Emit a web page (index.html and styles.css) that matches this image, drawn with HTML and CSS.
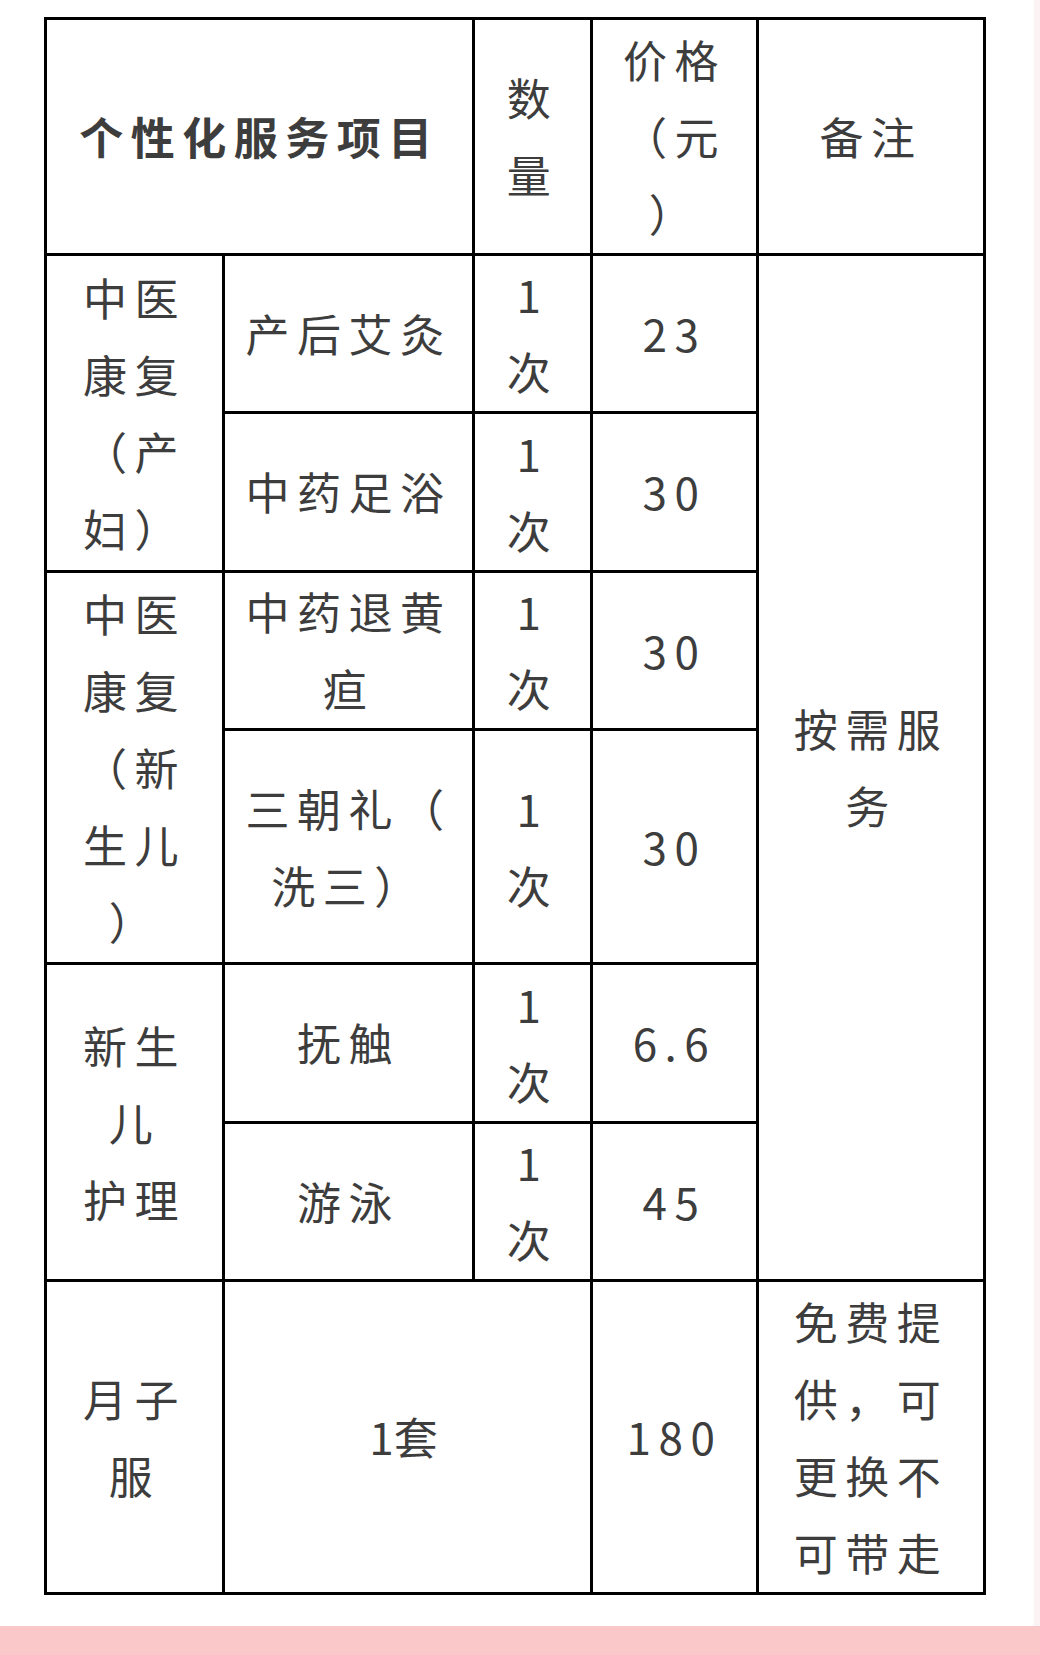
FILE: index.html
```html
<!DOCTYPE html>
<html lang="zh-CN">
<head>
<meta charset="utf-8">
<title>个性化服务项目</title>
<link rel="stylesheet" href="styles.css">
</head>
<body>
<div class="page">
  <table class="price-table">
    <colgroup>
      <col class="c-cat">
      <col class="c-item">
      <col class="c-qty">
      <col class="c-price">
      <col class="c-note">
    </colgroup>
    <tr class="head">
      <th colspan="2" class="title">个性化服务项目</th>
      <th>数<br>量</th>
      <th>价格<br>（元<br>）</th>
      <th>备注</th>
    </tr>
    <tr>
      <td rowspan="2">中医<br>康复<br>（产<br>妇）</td>
      <td>产后艾灸</td>
      <td>1<br>次</td>
      <td>23</td>
      <td rowspan="6" class="note">按需服<br>务</td>
    </tr>
    <tr>
      <td>中药足浴</td>
      <td>1<br>次</td>
      <td>30</td>
    </tr>
    <tr>
      <td rowspan="2">中医<br>康复<br>（新<br>生儿<br>）</td>
      <td>中药退黄<br>疸</td>
      <td>1<br>次</td>
      <td>30</td>
    </tr>
    <tr class="tall">
      <td>三朝礼（<br>洗三）</td>
      <td>1<br>次</td>
      <td>30</td>
    </tr>
    <tr>
      <td rowspan="2">新生<br>儿<br>护理</td>
      <td>抚触</td>
      <td>1<br>次</td>
      <td>6.6</td>
    </tr>
    <tr>
      <td>游泳</td>
      <td>1<br>次</td>
      <td>45</td>
    </tr>
    <tr>
      <td>月子<br>服</td>
      <td colspan="2" class="set">1套</td>
      <td>180</td>
      <td>免费提<br>供，可<br>更换不<br>可带走</td>
    </tr>
  </table>
</div>
<div class="band"></div>
</body>
</html>
```

FILE: styles.css
```css
html, body {
  margin: 0;
  padding: 0;
  background: #ffffff;
}

body {
  width: 1040px;
  overflow: hidden;
}

.page {
  padding: 17px 0 31px 44px;
  border-right: 6px solid #fcf4f4;
  box-sizing: border-box;
  width: 1040px;
}

.price-table {
  border-collapse: collapse;
  table-layout: fixed;
  width: 942px;
  font-family: "Noto Sans CJK SC", "Noto Sans", sans-serif;
  font-size: 44px;
  line-height: 77px;
  letter-spacing: 7.5px;
  color: #3d3d3d;
}

.c-cat { width: 178px; }
.c-item { width: 250px; }
.c-qty { width: 118px; }
.c-price { width: 166px; }
.c-note { width: 227px; }

.price-table th,
.price-table td {
  border: 3px solid #000000;
  padding: 0.75px 2px;
  text-align: center;
  vertical-align: middle;
  font-weight: 400;
  white-space: nowrap;
}

.price-table th.title {
  font-weight: 700;
}

.price-table tr.tall > td {
  height: 229.5px;
}

.price-table td.set {
  letter-spacing: 0;
  padding-right: 10px;
}

.band {
  height: 40px;
  background: #fac8c8;
}
```
